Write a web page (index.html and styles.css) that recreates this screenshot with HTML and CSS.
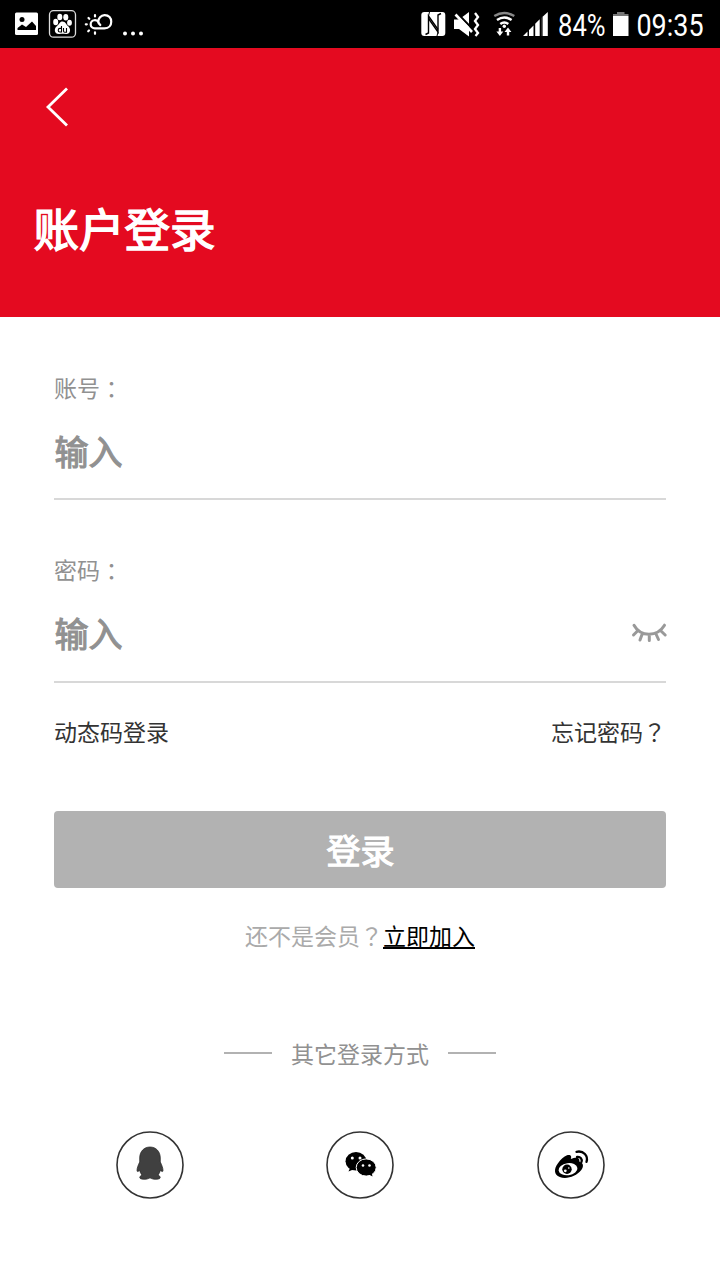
FILE: index.html
```html
<!DOCTYPE html>
<html lang="zh-CN">
<head>
<meta charset="utf-8">
<title>账户登录</title>
<link rel="stylesheet" href="styles.css">
</head>
<body>
<div class="status">
  <div class="status-group">
    <svg width="44" height="48" viewBox="0 0 44 48"><rect x="15" y="12.5" width="23" height="22.5" rx="1.5" fill="#fff"/><circle cx="22" cy="19.5" r="2.5"/><path d="M17.500 30v-2l4.500-3.500 4 2.500 6-5.500 4 4.500v4z"/></svg>
    <svg width="36" height="48" viewBox="44 0 36 48"><rect x="49.500" y="10.700" width="26" height="26.500" rx="4" fill="none" stroke="#ddd" stroke-width="1.300"/><g fill="#fff"><ellipse cx="55.700" cy="22" rx="2.500" ry="3.200"/><ellipse cx="59.800" cy="17" rx="2.500" ry="3.200"/><ellipse cx="65.800" cy="17.200" rx="2.500" ry="3.200"/><ellipse cx="69.500" cy="22.800" rx="2.400" ry="3"/><path d="M62.500 21.500c3 0 3.500 3 6 5 3 3 1.500 8-2.500 7.500-3-.5-4-.5-6.500 0-5 .5-6-5-3-7.500 3-2.300 3-5 6-5z"/></g><path d="M61.500 26v6h-1.500a1.500 1.500 0 0 1 0-3.600h1.500M63.500 28v3q0 1.200 1.200 1.200h1.800V28" fill="none" stroke="#000" stroke-width="1.100"/></svg>
    <svg width="38" height="48" viewBox="80 0 38 48"><g fill="none" stroke="#fff" stroke-width="2.200" stroke-linecap="round"><path d="M98.800 23.500a4.100 4.100 0 1 0-4 4.900H104.500c9 0 9-13.500 0-13.300-3.700.2-6.200 3.400-6.200 6.400q.3 2.400 2 3.500"/><path d="M95 15v1.500M88.500 18l.8.800M85.800 24.300h1M88.200 31.300l.8-.8M95 32.300v1.500"/></g></svg>
    <svg width="32" height="48" viewBox="118 0 32 48" fill="#fff"><circle cx="125" cy="33.500" r="2"/><circle cx="133" cy="33.500" r="2"/><circle cx="141" cy="33.500" r="2"/></svg>
  </div>
  <div class="status-group">
    <svg width="34" height="48" viewBox="416 0 34 48"><rect x="421.300" y="12" width="24" height="24" rx="3" fill="#fff"/><g fill="none" stroke="#000" stroke-width="1.400"><path d="M425.500 34.500l3-1.500V16l9.500 13.500"/><path d="M441 13.500l-3 1.500v17L428.500 18.500"/></g><path d="M429.500 12l-1 4M437 36l1-4" stroke="#000" stroke-width="1"/></svg>
    <svg width="40" height="48" viewBox="450 0 40 48"><path d="M454 19.500h5l10-7.500V36.500l-10-7.500h-5z" fill="#fff"/><path d="M457 13L473 29.500" stroke="#000" stroke-width="2.200"/><path d="M455.500 14.500L472 32" stroke="#fff" stroke-width="2.600"/><path d="M475 13l3 4-3 4 3 4-3 4 3 4-2.500 3" fill="none" stroke="#fff" stroke-width="2.300"/></svg>
    <svg width="30" height="48" viewBox="490 0 30 48"><g fill="none" stroke="#fff" stroke-width="2.400"><path d="M494.300 16q10-6 20 0" stroke="#888"/><path d="M497 20q7.300-5 14.600 0"/><path d="M500.300 24q4-3.200 8 0"/></g><circle cx="504.300" cy="26.200" r="1.700" fill="#fff"/><path d="M498.700 28h2.400v3.500h2.200l-3.400 4.500-3.500-4.500h2.300zM506.800 35.500h2.400V32h2.200l-3.400-4.500-3.500 4.500h2.300z" fill="#fff"/></svg>
    <svg width="36" height="48" viewBox="520 0 36 48" fill="#fff"><path d="M523 36l4.500-4.500V36zM529 36v-6l4.500-4.500V36zM535.200 36V23.800l4.500-4.500V36zM541.500 36V17.800l6.300-5.800V36z"/><path d="M541.300 17v19h1.300V17z" fill="#000"/></svg>
    <svg width="54" height="48" viewBox="556 0 54 48"><text class="status-text" x="558" y="35.800" textLength="47.500" lengthAdjust="spacingAndGlyphs">84%</text></svg>
    <svg width="24" height="48" viewBox="610 0 24 48"><path d="M613 16v-2h4v-2h7.500v2h4v2z" fill="#777"/><path d="M613 16h15.500v20H613z" fill="#fff"/></svg>
    <svg width="86" height="48" viewBox="634 0 86 48"><text class="status-text" x="636.500" y="35.800" textLength="67" lengthAdjust="spacingAndGlyphs">09:35</text></svg>
  </div>
</div>
<header class="header">
  <svg class="back" width="24" height="40" viewBox="0 0 24 40"><path d="M22 1.500L3 20l19 18.500" fill="none" stroke="#fff" stroke-width="2.800"/></svg>
  <h1 class="title">账户登录</h1>
</header>
<main class="form">
  <div class="field">
    <div class="label">账号<span lang="zh-TW" class="punct colon">：</span></div>
    <div class="value">输入</div>
  </div>
  <div class="field">
    <div class="label">密码<span lang="zh-TW" class="punct colon">：</span></div>
    <div class="value">输入
      <svg width="36" height="24" viewBox="631 620 36 24" fill="none" stroke="#999" stroke-width="3" stroke-linecap="round"><path d="M634 625.200q5 9 15 9t15.500-9M637.500 631l-4 4M642.200 634l-2.200 6M649.300 635v5.500M656 634l2.500 5.500M661 631l4.200 4"/></svg>
    </div>
  </div>
  <div class="links"><span>动态码登录</span><span>忘记密码<span lang="zh-TW" class="punct">？</span></span></div>
  <div class="submit">登录</div>
  <div class="join">还不是会员<span lang="zh-TW" class="punct">？</span><span class="join-link">立即加入</span></div>
  <div class="other"><i class="rule"></i><span>其它登录方式</span><i class="rule"></i></div>
  <div class="socials">
    <svg width="68" height="68" viewBox="116 1131 68 68"><circle class="ring" cx="150" cy="1165" r="33"/><path fill="#404040" stroke="#222" stroke-width=".7" d="M150 1147c6 0 10.300 4.500 10.300 11v4c1.500 3 2.700 6 2.700 8.500 0 1.500-1.300 1.500-2.500-.5-.5 2-1.300 3.600-2.500 5 3 1.500 3.300 4-1 4.200-3 .3-5-.2-7-1.400-2 1.200-4 1.700-7 1.400-4.300-.2-4-2.700-1-4.200-1.200-1.400-2-3-2.500-5-1.200 2-2.500 2-2.500.5 0-2.500 1.200-5.500 2.700-8.500v-4c0-6.500 4.300-11 10.300-11z"/></svg>
    <svg width="68" height="68" viewBox="326 1131 68 68"><circle class="ring" cx="360" cy="1165" r="33"/><ellipse cx="356" cy="1161.300" rx="10.500" ry="9.300"/><path d="M350 1168l-1.500 3.500 6-2.500z"/><ellipse cx="366.200" cy="1167.500" rx="10" ry="8.600" stroke="#fff" stroke-width="1"/><path d="M369 1174.500l3.500 2-1-4.500z"/><g fill="#fff"><circle cx="352.300" cy="1158" r="1.500"/><circle cx="360" cy="1158" r="1.500"/><circle cx="363" cy="1165.500" r="1.300"/><circle cx="369.500" cy="1165.500" r="1.300"/></g></svg>
    <svg width="68" height="68" viewBox="536.500 1131 68 68"><circle class="ring" cx="570.500" cy="1165" r="33"/><path d="M566.500 1155.300c4-1 4.800 1.200 3.800 3.700 5-2 9.500-2 8.500 2.500 4.500 1.500 4.500 5 2 8.500-5 6.500-15 9.500-21.500 7-6-2.300-6-8-2-13.500 3-4 6-7.200 9.200-8.200z"/><ellipse cx="567.500" cy="1169.200" rx="9.500" ry="6" fill="#fff" transform="rotate(-8 567.500 1169.200)"/><circle cx="566.500" cy="1169.200" r="4.700"/><circle cx="564.800" cy="1170.800" r="1.400" fill="#fff"/><circle cx="568.300" cy="1168" r=".8" fill="#fff"/><path d="M576 1151.800c7-1.500 12 4 10 10M576.500 1157c3.500-.5 5.500 2 4.500 5" fill="none" stroke="#000" stroke-width="2.300" stroke-linecap="round"/></svg>
  </div>
</main>
</body>
</html>
```
FILE: styles.css
```css
body {
  margin: 0;
  background: #fff;
  font-family: "Noto Sans CJK SC", sans-serif;
  font-size: 23px;
  line-height: 34px;
}
svg { display: block; flex: none; overflow: visible; }
.status {
  display: flex;
  justify-content: space-between;
  height: 48px;
  background: #000;
}
.status-group { display: flex; }
.status-text {
  font-family: Roboto, sans-serif;
  font-size: 31px;
  fill: #fff;
}
.header {
  box-sizing: border-box;
  height: 269px;
  padding: 39px 33px 0;
  background: #e40a20;
}
.back { margin-left: 12px; }
.title {
  margin: 66px 0 0 .5px;
  font-size: 45.500px;
  line-height: 68px;
  font-weight: 400;
  -webkit-text-stroke: 1.500px currentColor;
  color: #fff;
}
.form { padding: 53px 54px 0; }
.punct { font-family: "Noto Sans CJK TC", sans-serif; }
.colon { display: inline-block; line-height: 1; transform: translateY(1px); }
.field {
  box-sizing: border-box;
  height: 130px;
  margin-bottom: 52px;
  border-bottom: 2px solid #d8d8d8;
  color: #919191;
}
.field + .field { height: 131px; }
.value {
  display: flex;
  justify-content: space-between;
  align-items: center;
  margin-top: 22px;
  padding-left: .5px;
  font-size: 34px;
  line-height: 50px;
  font-weight: 400;
  -webkit-text-stroke: 1.100px currentColor;
}
.value svg { margin: -3px -1px 0 0; }
.links {
  display: flex;
  justify-content: space-between;
  margin-top: -21px;
  color: #333;
}
.submit {
  height: 77px;
  margin-top: 63px;
  border-radius: 4px;
  background: #b2b2b2;
  color: #fff;
  font-size: 34px;
  line-height: 77px;
  text-indent: 1px;
  -webkit-text-stroke: 1.200px currentColor;
  text-align: center;
}
.join {
  margin-top: 30px;
  color: #aaa;
  text-align: center;
}
.join-link {
  color: #000;
  text-decoration: underline;
  text-decoration-thickness: 1.500px;
  text-underline-offset: 2px;
  text-decoration-skip-ink: none;
}
.other {
  display: flex;
  justify-content: center;
  align-items: center;
  gap: 19px;
  margin-top: 84px;
  color: #919191;
}
.rule { width: 48px; height: 2px; background: #b2b2b2; }
.socials {
  display: flex;
  justify-content: space-between;
  margin-top: 61px;
  padding: 0 61.500px 0 62px;
}
.ring { fill: #fff; stroke: #333; stroke-width: 1.600; }
```
